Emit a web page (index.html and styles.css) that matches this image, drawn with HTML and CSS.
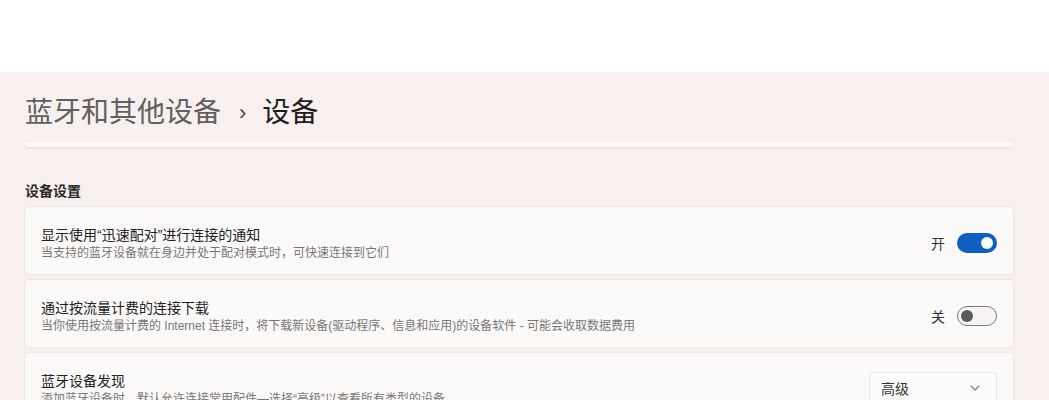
FILE: index.html
```html
<!DOCTYPE html>
<html lang="zh-CN">
<head>
<meta charset="utf-8">
<title>设备</title>
<link rel="stylesheet" href="styles.css">
</head>
<body>
<div class="topbar"></div>
<main class="content">
  <h1 class="crumbs"><span class="crumb-parent">蓝牙和其他设备</span><span class="crumb-sep">›</span><span class="crumb-current">设备</span></h1>
  <div class="card-tail"></div>
  <h2 class="section-label">设备设置</h2>
  <div class="card-list">
    <div class="card">
      <div class="card-text">
        <div class="card-title">显示使用“迅速配对”进行连接的通知</div>
        <div class="card-desc">当支持的蓝牙设备就在身边并处于配对模式时，可快速连接到它们</div>
      </div>
      <div class="card-control">
        <span class="toggle-label">开</span>
        <span class="toggle on"><span class="knob"></span></span>
      </div>
    </div>
    <div class="card">
      <div class="card-text">
        <div class="card-title">通过按流量计费的连接下载</div>
        <div class="card-desc">当你使用按流量计费的 Internet 连接时，将下载新设备(驱动程序、信息和应用)的设备软件 - 可能会收取数据费用</div>
      </div>
      <div class="card-control">
        <span class="toggle-label">关</span>
        <span class="toggle off"><span class="knob"></span></span>
      </div>
    </div>
    <div class="card">
      <div class="card-text">
        <div class="card-title">蓝牙设备发现</div>
        <div class="card-desc">添加蓝牙设备时，默认允许连接常用配件—选择“高级”以查看所有类型的设备</div>
      </div>
      <div class="card-control">
        <div class="select">
          <span class="select-value">高级</span>
          <svg class="chevron" width="10" height="6" viewBox="0 0 10 6"><path d="M1 1 L5 5 L9 1" fill="none" stroke="#777" stroke-width="1.1" stroke-linecap="round" stroke-linejoin="round"/></svg>
        </div>
      </div>
    </div>
  </div>
</main>
</body>
</html>
```
FILE: styles.css
```css
html, body {
  margin: 0;
  padding: 0;
}
body {
  background: #f8f0ee;
  font-family: "Liberation Sans", "Noto Sans CJK SC", sans-serif;
  color: #1b1b1b;
  overflow: hidden;
  height: 400px;
}
.topbar {
  height: 72px;
  background: #ffffff;
}
.content {
  padding: 0 36px 0 25px;
}
.crumbs {
  margin: 0;
  padding-top: 21px;
  height: 40px;
  line-height: 40px;
  font-size: 28px;
  font-weight: 400;
  display: flex;
  align-items: center;
}
.crumb-parent {
  color: #606060;
}
.crumb-sep {
  color: #4a4a4a;
  font-size: 22px;
  margin: 0 16px 0 18px;
}
.crumb-current {
  color: #1d1d1d;
}
.card-tail {
  margin-top: 9px;
  height: 5px;
  background: #fdfbfb;
  border-radius: 0 0 4px 4px;
  box-shadow: 0 1px 2px rgba(150, 120, 115, 0.18);
}
.section-label {
  margin: 34px 0 0 0;
  font-size: 14px;
  line-height: 20px;
  font-weight: 600;
  color: #2a2a2a;
}
.card-list {
  margin-top: 6px;
  display: flex;
  flex-direction: column;
  gap: 6px;
}
.card {
  box-sizing: border-box;
  height: 67px;
  background: #fcfaf9;
  border-radius: 4px;
  box-shadow: 0 0 0 1px rgba(232, 222, 220, 0.5);
  display: flex;
  align-items: center;
  padding: 0 16px;
}
.card-text {
  flex: 1;
  padding-top: 4px;
}
.card-title {
  font-size: 14px;
  line-height: 20px;
  color: #222;
}
.card-desc {
  font-size: 12px;
  line-height: 16px;
  color: #767676;
  margin-top: 0;
}
.card-control {
  display: flex;
  align-items: center;
  gap: 12px;
  padding-top: 4px;
}
.toggle-label {
  font-size: 14px;
  color: #333;
}
.toggle {
  box-sizing: border-box;
  width: 40px;
  height: 20px;
  border-radius: 10px;
  display: flex;
  align-items: center;
  padding: 0 4px;
}
.toggle.on {
  background: #0f5fc0;
  justify-content: flex-end;
}
.toggle.off {
  background: #f7f3f2;
  border: 1px solid #7a7a7a;
  justify-content: flex-start;
  padding: 0 3px;
}
.knob {
  width: 12px;
  height: 12px;
  border-radius: 50%;
}
.toggle.on .knob {
  background: #ffffff;
}
.toggle.off .knob {
  background: #5a5a5a;
}
.select {
  box-sizing: border-box;
  width: 128px;
  height: 32px;
  background: #fdfcfc;
  border: 1px solid #ebe6e5;
  border-radius: 4px;
  display: flex;
  align-items: center;
  justify-content: space-between;
  padding: 0 16px 0 11px;
  margin-top: -2px;
}
.select-value {
  font-size: 14px;
  color: #333;
}
.chevron {
  display: block;
}
```
